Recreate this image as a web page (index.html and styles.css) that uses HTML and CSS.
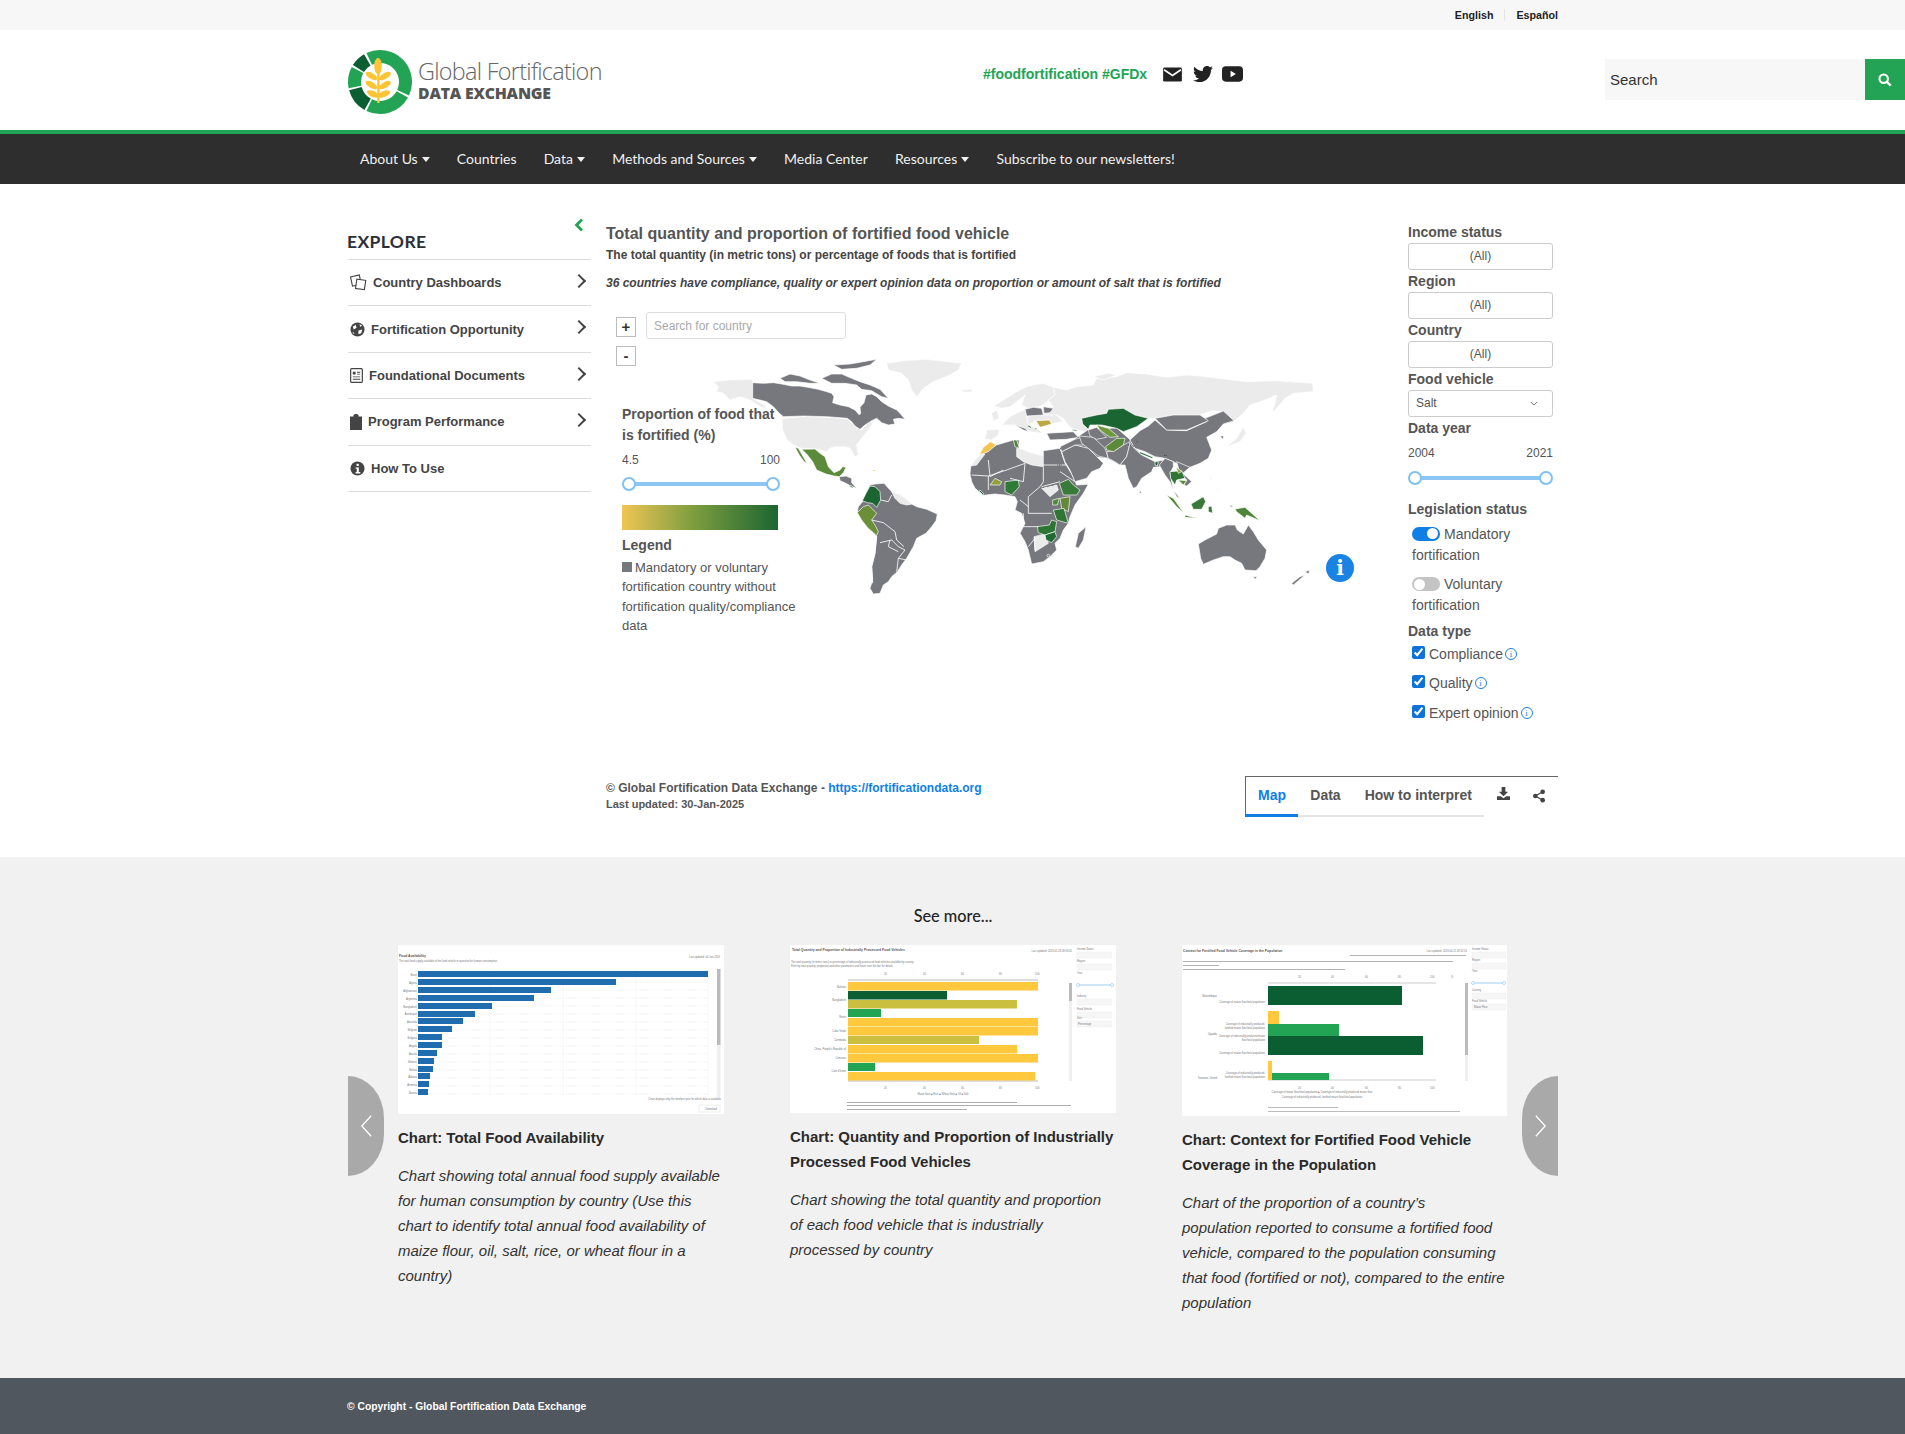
FILE: index.html
```html
<!DOCTYPE html>
<html lang="en">
<head>
<meta charset="utf-8">
<title>Global Fortification Data Exchange</title>
<link rel="stylesheet" href="styles.css">
</head>
<body>
<div class="topbar"><a class="lang lang-first">English</a><a class="lang">Español</a></div>

<header class="masthead">
  <a class="logo">
    <svg class="logo-mark" viewBox="0 0 66 66" width="66" height="66">
      <g fill="none" stroke-width="13">
        <path stroke="#23a455" d="M22.2 9.9A25.5 25.5 0 0 1 56.1 43.8"/>
        <path stroke="#23a455" d="M55.3 45.4A25.5 25.5 0 0 1 22.2 56.1"/>
        <path stroke="#0b5e31" d="M20.6 55.3A25.5 25.5 0 0 1 8.4 39.6"/>
        <path stroke="#23a455" d="M8 37.9A25.5 25.5 0 0 1 10.5 21"/>
        <path stroke="#0b5e31" d="M11.4 19.5A25.5 25.5 0 0 1 20.3 10.9"/>
      </g>
      <g fill="#fdc536">
        <ellipse cx="31" cy="17" rx="3.800" ry="8"/>
        <ellipse cx="24.500" cy="27" rx="6.500" ry="3" transform="rotate(30 24.500 27)"/>
        <ellipse cx="38" cy="27" rx="6.500" ry="3" transform="rotate(-30 38 27)"/>
        <ellipse cx="24.500" cy="36" rx="6.500" ry="3" transform="rotate(30 24.500 36)"/>
        <ellipse cx="38" cy="36" rx="6.500" ry="3" transform="rotate(-30 38 36)"/>
        <ellipse cx="26" cy="45" rx="6.500" ry="3" transform="rotate(25 26 45)"/>
        <ellipse cx="37" cy="45" rx="6.500" ry="3" transform="rotate(-25 37 45)"/>
        <rect x="30.200" y="20" width="2.400" height="34"/>
      </g>
    </svg>
    <span class="logo-text"><span class="logo-top">Global Fortification</span><span class="logo-bottom">DATA EXCHANGE</span></span>
  </a>
  <div class="social">
    <span class="hashtags">#foodfortification #GFDx</span>
    <svg class="soc" viewBox="0 0 20 16" width="19" height="15"><rect width="20" height="15" y=".5" rx="1.500" fill="#222"/><path d="M1 3l9 6 9-6" fill="none" stroke="#fff" stroke-width="1.800"/></svg>
    <svg class="soc soc-tw" viewBox="0 0 512 512" width="20" height="20"><path fill="#222" d="M459.37 151.716c.325 4.548.325 9.097.325 13.645 0 138.72-105.583 298.558-298.558 298.558-59.452 0-114.68-17.219-161.137-47.106 8.447.974 16.568 1.299 25.34 1.299 49.055 0 94.213-16.568 130.274-44.832-46.132-.975-84.792-31.188-98.112-72.772 6.498.974 12.995 1.624 19.818 1.624 9.421 0 18.843-1.3 27.614-3.573-48.081-9.747-84.143-51.98-84.143-102.985v-1.299c13.969 7.797 30.214 12.67 47.431 13.319-28.264-18.843-46.781-51.005-46.781-87.391 0-19.492 5.197-37.36 14.294-52.954 51.655 63.675 129.3 105.258 216.365 109.807-1.624-7.797-2.599-15.918-2.599-24.04 0-57.828 46.782-104.934 104.934-104.934 30.213 0 57.502 12.67 76.67 33.137 23.715-4.548 46.456-13.32 66.599-25.34-7.798 24.366-24.366 44.833-46.132 57.827 21.117-2.273 41.584-8.122 60.426-16.243-14.292 20.791-32.161 39.308-52.628 54.253z"/></svg>
    <svg class="soc" viewBox="0 0 22 16" width="21" height="16"><rect width="22" height="16" rx="4" fill="#222"/><path d="M9 4.500l5.500 3.500L9 11.500z" fill="#fff"/></svg>
  </div>
  <form class="site-search">
    <input class="site-search-input" type="text" placeholder="Search">
    <button class="site-search-btn" type="button" aria-label="Search">
      <svg viewBox="0 0 16 16" width="14" height="14"><circle cx="6.500" cy="6.500" r="4.800" fill="none" stroke="#fff" stroke-width="2.400"/><path d="M10 10l4.500 4.500" stroke="#fff" stroke-width="2.800"/></svg>
    </button>
  </form>
</header>

<nav class="mainnav">
  <a class="nav-item caret">About Us</a>
  <a class="nav-item">Countries</a>
  <a class="nav-item caret">Data</a>
  <a class="nav-item caret">Methods and Sources</a>
  <a class="nav-item">Media Center</a>
  <a class="nav-item caret">Resources</a>
  <a class="nav-item">Subscribe to our newsletters!</a>
</nav>

<main class="viz">
  <div class="columns">
    <aside class="sidebar">
      <div class="side-head">
        <h2 class="side-title">EXPLORE</h2>
        <svg class="side-collapse" viewBox="0 0 10 14" width="10" height="14"><path d="M8 1.500L2.500 7 8 12.500" fill="none" stroke="#23a455" stroke-width="2.800"/></svg>
      </div>
      <a class="side-row">
        <svg class="side-ic" viewBox="0 0 18 18" width="17" height="17"><g fill="#fff" stroke="#444" stroke-width="1.200"><rect x="1.500" y="2" width="9.500" height="10" transform="rotate(-12 6 7)"/><rect x="6.500" y="6" width="9.500" height="10" transform="rotate(8 11 11)"/></g></svg>
        <span class="side-label">Country Dashboards</span><span class="side-chev"></span>
      </a>
      <a class="side-row">
        <svg class="side-ic" viewBox="0 0 16 16" width="15" height="15"><circle cx="8" cy="8" r="7.500" fill="#444"/><path d="M3 5l3-2 1 3-3 2zM9 9l4-1-1 4-3 1zM10 2l3 2-2 1zM3 10l2 3-2-1z" fill="#fff"/></svg>
        <span class="side-label">Fortification Opportunity</span><span class="side-chev"></span>
      </a>
      <a class="side-row">
        <svg class="side-ic" viewBox="0 0 14 16" width="13" height="15"><rect x=".7" y=".7" width="12.600" height="14.600" rx="1" fill="none" stroke="#444" stroke-width="1.300"/><path d="M3 4h3v3H3zM7.500 4H11v1H7.500zM7.500 6H11v1H7.500zM3 9h8v1H3zM3 11.500h8v1H3z" fill="#444"/></svg>
        <span class="side-label">Foundational Documents</span><span class="side-chev"></span>
      </a>
      <a class="side-row">
        <svg class="side-ic" viewBox="0 0 12 16" width="12" height="16"><path d="M0 2.500h3.500V1l1.500-1h2l1.500 1v1.500H12V16H0z" fill="#444"/></svg>
        <span class="side-label">Program Performance</span><span class="side-chev"></span>
      </a>
      <a class="side-row">
        <svg class="side-ic" viewBox="0 0 16 16" width="15" height="15"><circle cx="8" cy="8" r="7.500" fill="#444"/><rect x="7" y="3" width="2.400" height="2.400" fill="#fff"/><path d="M6 6.800h3.400v5H11v1.500H6v-1.500h1.200V8.300H6z" fill="#fff"/></svg>
        <span class="side-label">How To Use</span>
      </a>
    </aside>

    <section class="center">
      <h1 class="viz-title">Total quantity and proportion of fortified food vehicle</h1>
      <p class="viz-sub">The total quantity (in metric tons) or percentage of foods that is fortified</p>
      <p class="viz-note">36 countries have compliance, quality or expert opinion data on proportion or amount of salt that is fortified</p>

      <div class="map-canvas">
        <svg class="worldmap" viewBox="-150 0 1950 780" width="650" height="260">
          <g stroke="#fff" stroke-width="2" stroke-linejoin="round">
            <g fill="#ebebeb">
              <polygon points="-140,95 -95,90 -22,88 -22,145 20,170 10,175 -30,150 -60,140 -90,150 -110,130 -130,125 -125,110"/>
              <polygon points="66,205 130,200 200,202 262,207 275,218 285,230 305,240 330,212 338,220 325,240 310,258 300,270 290,285 295,315 285,320 270,295 255,290 225,290 210,295 200,305 170,297 125,295 100,285 80,268 68,240"/>
              <polygon points="380,40 430,32 500,28 605,40 595,60 570,75 520,95 490,115 470,140 455,120 445,90 425,70 385,60"/>
              <polygon points="605,120 640,118 632,126 608,126"/>
            </g>
            <g fill="#77787e">
              <polygon points="-22,98 10,100 40,98 65,102 95,108 120,108 150,113 175,118 200,125 215,130 222,140 218,158 240,165 265,170 285,180 298,195 302,190 300,172 312,158 318,135 335,132 350,140 365,155 385,168 410,180 420,190 435,208 415,205 400,208 405,222 385,225 365,218 350,205 335,212 315,225 300,238 285,228 275,215 262,205 200,200 130,198 70,200 58,190 40,170 20,155 -22,145"/>
              <polygon points="60,85 90,72 120,78 150,90 180,100 150,100 110,95 75,95"/>
              <polygon points="220,45 270,42 310,35 350,28 330,45 290,55 245,58"/>
              <polygon points="185,85 215,72 245,72 275,85 300,95 330,105 360,118 385,145 365,140 335,122 305,118 290,105 255,100 215,100"/>
              <polygon points="238,380 258,378 275,385 275,398 290,415 272,408 258,400 240,392"/>
              <polygon points="330,405 345,402 372,400 395,425 420,445 440,462 455,462 470,470 500,478 532,492 528,512 515,530 498,550 470,565 460,590 440,625 425,645 412,665 395,680 385,695 370,705 360,730 340,732 330,715 338,690 335,650 345,610 350,560 340,550 320,530 305,510 292,488 295,470 310,452 318,430"/>
            </g>
            <polygon fill="#ebebeb" points="395,425 418,432 445,452 455,462 440,465 420,460 405,445"/>
            <g fill="#5b8a3a">
              <polygon points="125,298 165,297 180,310 195,320 205,350 222,368 240,360 248,350 258,352 250,368 238,380 222,378 198,372 170,360 158,335 140,312"/>
              <polygon points="105,292 115,295 125,312 140,338 132,335 118,315"/>
            </g>
            <polygon fill="#1c6532" points="330,408 345,410 360,425 362,450 350,472 338,460 322,458 307,452 318,430"/>
            <polygon fill="#6a8f38" points="292,488 310,470 325,465 350,490 335,510 345,525 355,545 350,556 325,535 305,510"/>
            <polygon fill="#1c6532" points="270,405 280,412 277,414 268,408"/>
            <polygon fill="#f3c550" stroke="none" points="338,360 345,360 343,364"/>
            <g fill="none" stroke-width="2.500">
              <polyline points="362,450 385,455 395,435"/>
              <polyline points="335,510 370,518 405,545 410,570 432,590"/>
              <polyline points="350,556 345,610 335,650 338,700"/>
              <polyline points="360,578 395,570 415,590 435,600 415,625 410,665"/>
              <polyline points="415,625 440,630"/>
              <polyline points="390,570 385,590 415,605"/>
            </g>
          </g>
          <g transform="translate(600 0)" stroke="#fff" stroke-width="2" stroke-linejoin="round">
            <g fill="#ebebeb">
              <polygon points="100,168 130,150 170,125 205,108 250,100 280,112 285,135 265,150 250,165 235,170 205,175 185,165 195,135 170,155 150,170 125,175"/>
              <polygon points="280,112 320,120 350,110 400,105 410,85 470,80 500,68 560,72 620,82 680,75 720,78 800,88 860,95 950,92 1058,100 1060,125 1000,130 975,145 950,175 935,190 945,160 950,135 915,150 870,165 850,190 820,215 790,185 755,182 720,195 680,198 640,195 585,205 565,205 525,195 490,175 445,178 440,190 410,195 365,205 368,222 385,238 400,250 350,240 330,232 310,205 290,195 250,195 245,175 270,175 280,170 265,150 285,135"/>
              <polygon points="120,235 135,215 150,200 170,190 195,178 200,198 205,225 230,235 250,250 210,245 195,240 165,225 130,225"/>
              <polygon points="75,268 80,240 118,238 115,255 95,270"/>
              <polygon points="200,198 250,195 290,195 310,215 270,222 268,210 228,212 205,225"/>
              <polygon points="95,190 110,180 118,205 100,212"/>
              <polygon points="830,265 850,230 858,250 840,275 800,290"/>
              <polygon points="750,365 756,390 751,390"/>
              <polygon points="770,405 776,425 772,425"/>
              <polygon points="400,80 445,70 470,75 430,90"/>
            </g>
            <polygon fill="#77787e" points="30,372 32,350 45,335 60,318 72,310 90,295 110,285 160,270 178,270 175,295 215,310 250,318 250,302 300,295 315,340 335,372 350,405 385,403 370,430 345,465 330,500 325,520 310,540 300,565 285,580 290,600 270,620 250,635 215,642 205,600 195,575 180,550 195,520 185,490 165,480 172,455 165,440 135,435 105,432 70,436 45,415 35,395"/>
            <g fill="#ebebeb">
              <polygon points="170,295 215,310 250,318 250,350 215,345 190,335 170,320"/>
              <polygon points="32,348 58,315 75,312 50,345"/>
              <polygon points="222,560 255,552 265,580 225,605"/>
              <polygon points="245,415 290,405 295,420 270,440"/>
            </g>
            <polygon fill="#f3c550" points="58,315 70,292 92,275 108,285 85,305"/>
            <polygon fill="#4e8538" points="160,270 170,270 178,295 165,290"/>
            <polygon fill="#2f7a35" points="135,395 175,390 178,410 155,435 135,425"/>
            <polygon fill="#8fa03c" points="90,405 105,385 125,395 120,405"/>
            <polygon fill="#1c6532" points="60,420 72,432 68,434 58,424"/>
            <polygon fill="#39793a" points="298,400 325,388 340,405 360,420 350,435 310,435"/>
            <polygon fill="#63893a" points="300,445 330,440 325,485 305,475"/>
            <polygon fill="#4d8a3a" points="278,450 298,445 292,465 278,465"/>
            <polygon fill="#2f7535" points="280,480 312,475 325,520 290,510"/>
            <polygon fill="#2d7535" points="232,530 268,525 275,510 290,515 285,545 255,555 235,548"/>
            <polygon fill="#1f6b33" points="255,555 285,545 290,560 275,578 258,570"/>
            <polygon fill="#77787e" points="346,590 355,550 378,530 370,570 355,595"/>
            <circle cx="265" cy="617" r="4" fill="#77787e"/>
            <g fill="none" stroke-width="2.500">
              <polyline points="35,375 85,378 140,360 195,340"/>
              <polyline points="85,330 90,380 130,360"/>
              <polyline points="195,340 190,395 150,385"/>
              <polyline points="250,350 250,395 240,410 205,440 205,490 275,490"/>
              <polyline points="250,345 320,345"/>
              <polyline points="180,450 205,470"/>
              <polyline points="190,490 190,530 235,530"/>
              <polyline points="205,590 225,565 225,600"/>
              <polyline points="300,365 345,395"/>
              <polyline points="245,410 300,395"/>
              <polyline points="85,378 85,420"/>
            </g>
            <g fill="#77787e">
              <polygon points="195,178 220,172 245,175 250,195 200,198"/>
              <polygon points="250,170 280,175 270,188 252,190"/>
              <polygon points="260,250 290,248 340,245 355,262 320,268 270,270"/>
              <polygon points="165,225 195,235 205,245 190,240"/>
              <polygon stroke="none" points="345,268 358,258 385,240 470,235 510,270 525,295 545,315 585,335 510,300 480,345 445,325 410,320 385,295 345,285"/>
              <polygon points="305,305 345,285 385,295 410,320 430,340 420,355 395,365 380,385 345,395 330,360 315,335"/>
              <polygon points="300,290 345,268 365,262 370,285 345,285 305,305"/>
              <polygon points="358,258 400,262 435,295 445,325 415,318 385,295 365,280"/>
              <polygon points="385,240 410,232 440,262 410,268 390,258"/>
              <polygon points="440,305 462,303 490,285 510,275 505,300 500,320 480,345 465,335 445,325"/>
              <polygon points="510,280 525,298 545,315 585,335 610,330 600,350 580,352 575,365 545,385 530,410 520,415 505,385 495,345 480,345 500,320 505,300"/>
              <polygon points="510,270 540,242 565,228 585,210 620,240 680,242 740,215 735,205 790,183 822,212 790,222 770,245 740,262 755,300 745,325 720,340 690,352 660,345 640,335 615,325 585,320 555,305 525,295"/>
              <polygon points="585,205 640,195 720,195 745,212 680,240 620,240"/>
              <polygon points="598,345 615,325 640,335 640,350 630,370 640,420 630,395 615,375"/>
              <polygon points="650,335 690,352 668,370 695,395 680,408 672,405 680,390 660,370"/>
              <polygon points="640,420 660,445 650,440"/>
              <polygon points="780,258 792,258 788,268"/>
              <polygon points="538,420 545,428 539,430"/>
            </g>
            <polygon fill="#bba743" points="228,212 268,210 275,222 240,232"/>
            <polygon fill="#1c6532" points="205,225 215,232 211,234 203,229"/>
            <polygon fill="#1c6532" points="337,238 352,241 350,244 337,241"/>
            <polygon fill="#1b6533" points="365,205 410,195 440,190 445,178 490,175 525,195 565,205 530,230 490,245 470,235 425,225 390,225 385,238 368,222"/>
            <polygon fill="#6f9a3a" points="410,225 445,235 475,260 450,262 420,240"/>
            <polygon fill="#5b8a3a" points="437,290 470,265 495,265 490,285 460,305 440,300"/>
            <polygon fill="#1c6532" points="540,305 580,322 575,325 538,310"/>
            <polygon fill="#1c6532" points="585,335 595,335 592,348 585,345"/>
            <polygon fill="#2f7535" points="630,365 665,362 675,385 650,390 645,405 632,385"/>
            <polygon fill="#8aa03a" points="648,350 665,365 655,370"/>
            <polygon fill="#5b8a3a" points="655,390 680,392 670,405"/>
            <polygon fill="#4e8538" points="620,435 640,445 672,490 650,470"/>
            <polygon fill="#4e8538" points="675,495 710,505 675,502"/>
            <polygon fill="#4e8538" points="810,465 820,468 812,472"/>
            <polygon fill="#4e8538" points="825,477 855,472 900,512 860,495 855,505 830,485"/>
            <polygon fill="#3a7a38" points="693,462 730,440 737,455 725,478 700,478"/>
            <polygon fill="#3a7a38" points="745,470 755,468 758,490 745,485"/>
            <g fill="#77787e">
              <polygon points="715,582 735,570 770,552 775,535 800,525 825,525 832,540 850,552 865,525 880,545 895,570 920,600 915,625 900,650 888,662 855,660 845,640 825,630 810,620 790,620 760,630 730,643 722,625"/>
              <polygon points="880,680 892,680 885,688"/>
              <polygon points="995,700 1020,680 1035,675 1000,705"/>
              <polygon points="1035,665 1050,660 1045,672"/>
            </g>
            <path d="M292 345h14M248 412h6M262 410h6M275 407h6M505 285h6M518 288h6M530 275h5M612 316h8M300 296h4M226 236h4" fill="none" stroke="#222" stroke-width="2" stroke-dasharray="3 2"/>
          </g>
        </svg>
        <div class="map-tools">
          <div class="zoom-col"><button class="zoom-btn" type="button">+</button><button class="zoom-btn" type="button">-</button></div>
          <input class="country-search" type="text" placeholder="Search for country">
        </div>
        <div class="legend">
          <h3 class="legend-title">Proportion of food that is fortified (%)</h3>
          <div class="range-vals"><span>4.5</span><span>100</span></div>
          <div class="range"><span class="knob"></span><span class="knob"></span></div>
          <div class="gradient"></div>
          <h3 class="legend-head">Legend</h3>
          <p class="legend-text"><span class="swatch"></span>Mandatory or voluntary fortification country without fortification quality/compliance data</p>
        </div>
        <span class="map-info">i</span>
      </div>
    </section>

    <aside class="filters">
      <label class="f-label">Income status</label><div class="f-box">(All)</div>
      <label class="f-label">Region</label><div class="f-box">(All)</div>
      <label class="f-label">Country</label><div class="f-box">(All)</div>
      <label class="f-label">Food vehicle</label>
      <div class="f-box f-select">Salt<svg viewBox="0 0 10 6" width="8" height="5"><path d="M1 1l4 4 4-4" fill="none" stroke="#555" stroke-width="1"/></svg></div>
      <label class="f-label">Data year</label>
      <div class="range-vals year-vals"><span>2004</span><span>2021</span></div>
      <div class="range year-range"><span class="knob"></span><span class="knob"></span></div>
      <label class="f-label f-legis">Legislation status</label>
      <div class="opt"><span class="toggle on"></span>Mandatory fortification</div>
      <div class="opt"><span class="toggle"></span>Voluntary fortification</div>
      <label class="f-label f-dtype">Data type</label>
      <div class="check"><input type="checkbox" checked><span>Compliance</span><span class="ci">i</span></div>
      <div class="check"><input type="checkbox" checked><span>Quality</span><span class="ci">i</span></div>
      <div class="check"><input type="checkbox" checked><span>Expert opinion</span><span class="ci">i</span></div>
    </aside>
  </div>

  <div class="viz-foot">
    <div class="credit">
      <p class="credit-main">© Global Fortification Data Exchange - <a class="credit-link">https://fortificationdata.org</a></p>
      <p class="credit-date">Last updated: 30-Jan-2025</p>
    </div>
    <div class="tabbar">
      <div class="tabs"><a class="tab active">Map</a><a class="tab">Data</a><a class="tab">How to interpret</a></div>
      <svg class="tab-ic" viewBox="0 0 14 14" width="13" height="13"><path d="M5 0h4v5h3L7 10 2 5h3zM0 10h4l3 2 3-2h4v4H0z" fill="#444"/></svg>
      <svg class="tab-ic tab-share" viewBox="0 0 13 14" width="12" height="14"><g fill="#444"><circle cx="10.500" cy="2.500" r="2.500"/><circle cx="10.500" cy="11.500" r="2.500"/><circle cx="2.500" cy="7" r="2.500"/></g><path d="M10.500 2.500l-8 4.500 8 4.500" fill="none" stroke="#444" stroke-width="1.300"/></svg>
    </div>
  </div>
</main>

<section class="more">
  <h2 class="more-title">See more...</h2>
  <div class="carousel">
    <button class="arrow arrow-left" type="button" aria-label="Previous"><svg viewBox="0 0 14 24" width="13" height="24"><path d="M12 1L2 12l10 11" fill="none" stroke="#fff" stroke-width="1.400"/></svg></button>
    <div class="cards">
      <article class="card">
        <svg class="thumb" viewBox="0 0 326 169" width="326" height="169">
          <rect width="326" height="169" fill="#fff"/>
          <text x="1" y="12" class="t4 td">Food Availability</text>
          <text x="1" y="17" class="t3">The total food supply available of the food vehicle in question for human consumption</text>
          <text x="322" y="13" class="t3 end">Last updated: 04-Jun-2019</text>
          <g stroke="#eee" stroke-dasharray="2 1" stroke-width=".7">
            <path d="M92 25V150M165 25V150M238 25V150M310 25V150"/>
            <path d="M20 37H310M20 45H310M20 53H310M20 61H310M20 69H310M20 77H310M20 85H310M20 93H310M20 101H310M20 109H310M20 117H310M20 125H310M20 133H310M20 141H310M20 149H310"/>
          </g>
          <g fill="#1f6cae">
            <rect x="20" y="26" width="290" height="6"/><rect x="20" y="34" width="198" height="6"/><rect x="20" y="42" width="133" height="6"/><rect x="20" y="50" width="116" height="6"/><rect x="20" y="58" width="74" height="6"/><rect x="20" y="66" width="57" height="6"/><rect x="20" y="73" width="45" height="6"/><rect x="20" y="81" width="34" height="6"/><rect x="20" y="89" width="24" height="6"/><rect x="20" y="97" width="24" height="6"/><rect x="20" y="105" width="19" height="6"/><rect x="20" y="113" width="16" height="6"/><rect x="20" y="121" width="15" height="6"/><rect x="20" y="128" width="12" height="6"/><rect x="20" y="136" width="11" height="6"/><rect x="20" y="144" width="10" height="6"/>
          </g>
          <g class="t3 end">
            <text x="19" y="31">Brazil</text><text x="19" y="39">Algeria</text><text x="19" y="47">Afghanistan</text><text x="19" y="55">Argentina</text><text x="19" y="63">Bangladesh</text><text x="19" y="70">Azerbaijan</text><text x="19" y="78">Australia</text><text x="19" y="86">Belgium</text><text x="19" y="94">Bulgaria</text><text x="19" y="102">Angola</text><text x="19" y="110">Austria</text><text x="19" y="118">Belarus</text><text x="19" y="126">Bolivia</text><text x="19" y="133">Albania</text><text x="19" y="141">Armenia</text><text x="19" y="149">Bosnia</text>
          </g>
          <rect x="319" y="24" width="3.500" height="76" fill="#bbb"/><rect x="319" y="100" width="3.500" height="52" fill="#f0f0f0"/>
          <text x="323" y="155" class="t3 end">Chart displays only the timeliest year for which data is available</text>
          <rect x="301" y="160" width="21" height="7" fill="#fff" stroke="#ddd" stroke-width=".5"/>
          <text x="319" y="165" class="t3 end">Download</text>
        </svg>
        <h3 class="card-title">Chart: Total Food Availability</h3>
        <p class="card-text">Chart showing total annual food supply available for human consumption by country (Use this chart to identify total annual food availability of maize flour, oil, salt, rice, or wheat flour in a country)</p>
      </article>
      <article class="card">
        <svg class="thumb" viewBox="0 0 326 168" width="326" height="168">
          <rect width="326" height="168" fill="#fff"/>
          <text x="2" y="6" class="t4 td">Total Quantity and Proportion of Industrially Processed Food Vehicles</text>
          <text x="1" y="18" class="t3">The total quantity (in metric tons) or percentage of industrially processed food vehicles available by country</text>
          <text x="1" y="22" class="t3">Filter by total quantity, proportion and other parameters and hover over the bar for details</text>
          <text x="282" y="7" class="t3 end">Last updated: 2019-01-28 09:09:41</text>
          <path d="M58 35H248M58 136H248" stroke="#bbb" stroke-width="1"/>
          <g class="t3"><text x="94" y="30">20</text><text x="133" y="30">40</text><text x="171" y="30">60</text><text x="209" y="30">80</text><text x="245" y="30">100</text><text x="94" y="144">20</text><text x="133" y="144">40</text><text x="171" y="144">60</text><text x="209" y="144">80</text><text x="245" y="144">100</text></g>
          <rect x="58" y="37" width="190" height="8.500" fill="#ffc83d"/>
          <rect x="58" y="46" width="99" height="8.500" fill="#0b5e31"/>
          <rect x="58" y="55" width="169" height="8.500" fill="#cbbf3f"/>
          <rect x="58" y="64" width="33" height="8" fill="#23a455"/>
          <rect x="58" y="73" width="190" height="8.500" fill="#ffc83d"/>
          <rect x="58" y="82" width="190" height="8.500" fill="#ffc83d"/>
          <rect x="58" y="91" width="131" height="8" fill="#cbbf3f"/>
          <rect x="58" y="100" width="169" height="8.500" fill="#ffc83d"/>
          <rect x="58" y="109" width="190" height="8.500" fill="#ffc83d"/>
          <rect x="58" y="118" width="27" height="8" fill="#23a455"/>
          <rect x="58" y="127" width="187" height="8.500" fill="#ffc83d"/>
          <g class="t3 end"><text x="56" y="43">Bahrain</text><text x="56" y="56">Bangladesh</text><text x="56" y="73">Benin</text><text x="56" y="87">Cabo Verde</text><text x="56" y="96">Cambodia</text><text x="56" y="105">China, People's Republic of</text><text x="56" y="114">Comoros</text><text x="56" y="127">Cote d'Ivoire</text></g>
          <rect x="279" y="38" width="3" height="18" fill="#bbb"/><rect x="279" y="56" width="3" height="80" fill="#f0f0f0"/>
          <g fill="#f6f6f6" stroke="#eee" stroke-width=".5"><rect x="287" y="7" width="35" height="6"/><rect x="287" y="19" width="35" height="6"/><rect x="287" y="54" width="35" height="6"/><rect x="287" y="67" width="35" height="6"/><rect x="287" y="76" width="35" height="6"/></g>
          <g class="t3"><text x="287" y="5">Income Status</text><text x="287" y="17">Region</text><text x="287" y="29">Year</text><text x="287" y="52">Industry</text><text x="287" y="65">Food Vehicle</text><text x="287" y="74">Unit</text><text x="288" y="80">Percentage</text></g>
          <path d="M288 40H322" stroke="#9fcdf3" stroke-width="1"/><g fill="#fff" stroke="#8cc4f2" stroke-width=".6"><circle cx="288" cy="40" r="1.500"/><circle cx="322" cy="40" r="1.500"/></g>
          <text x="153" y="150" class="t3 mid">Maize flour ■ Rice ■ Wheat flour ■ Oil ■ Salt</text>
          <g fill="#999"><rect x="57" y="157" width="170" height=".8"/><rect x="57" y="160" width="224" height=".8"/><rect x="57" y="164" width="120" height=".8"/></g>
        </svg>
        <h3 class="card-title">Chart: Quantity and Proportion of Industrially Processed Food Vehicles</h3>
        <p class="card-text">Chart showing the total quantity and proportion<br>of each food vehicle that is industrially<br>processed by country</p>
      </article>
      <article class="card">
        <svg class="thumb" viewBox="0 0 325 171" width="325" height="171">
          <rect width="325" height="171" fill="#fff"/>
          <text x="1" y="7" class="t4 td">Context for Fortified Food Vehicle Coverage in the Population</text>
          <text x="285" y="7" class="t3 end">Last updated: 2019-04-15 09:32:16</text>
          <g fill="#aaa"><rect x="1" y="16" width="270" height=".9"/><rect x="1" y="20" width="36" height=".9"/><rect x="1" y="24" width="162" height=".9"/><rect x="168" y="10" width="116" height=".9"/></g>
          <path d="M86 38H254M86 135H254" stroke="#ccc" stroke-width="1"/>
          <g class="t3"><text x="116" y="33">20</text><text x="149" y="33">40</text><text x="183" y="33">60</text><text x="216" y="33">80</text><text x="248" y="33">100</text><text x="269" y="33">%</text><text x="116" y="144">20</text><text x="149" y="144">40</text><text x="183" y="144">60</text><text x="216" y="144">80</text><text x="248" y="144">100</text></g>
          <rect x="86" y="41" width="134" height="19" fill="#0b5e31"/>
          <rect x="86" y="66" width="11" height="19" fill="#ffc83d"/>
          <rect x="86" y="79" width="71" height="19" fill="#23a455"/>
          <rect x="86" y="91" width="155" height="19" fill="#0b5e31"/>
          <rect x="86" y="116" width="4" height="19" fill="#ffc83d"/>
          <rect x="90" y="128" width="57" height="7" fill="#23a455"/>
          <g class="t3 end"><text x="35" y="52">Mozambique</text><text x="35" y="90">Uganda</text><text x="35" y="134">Tanzania, United</text><text x="83" y="58">Coverage of maize flour/total population</text><text x="83" y="80">Coverage of industrially produced,</text><text x="83" y="84">fortified maize flour/total population</text><text x="83" y="92">Coverage of industrially produced maize</text><text x="83" y="96">flour/total population</text><text x="83" y="109">Coverage of maize flour/total population</text><text x="83" y="129">Coverage of industrially produced,</text><text x="83" y="133">fortified maize flour/total population</text></g>
          <rect x="283" y="38" width="3" height="72" fill="#bbb"/><rect x="283" y="110" width="3" height="26" fill="#f0f0f0"/>
          <text x="140" y="148" class="t3 mid">Coverage of maize flour/total population ■ Coverage of industrially produced maize flour</text>
          <text x="140" y="153" class="t3 mid">Coverage of industrially produced, fortified maize flour/total population</text>
          <g fill="#aaa"><rect x="86" y="162" width="70" height=".8"/><rect x="86" y="166" width="192" height=".8"/></g>
          <g fill="#f6f6f6" stroke="#eee" stroke-width=".5"><rect x="290" y="7" width="34" height="6"/><rect x="290" y="18" width="34" height="6"/><rect x="290" y="48" width="34" height="6"/><rect x="290" y="59" width="34" height="6"/></g>
          <g class="t3"><text x="290" y="5">Income Status</text><text x="290" y="16">Region</text><text x="290" y="27">Year</text><text x="290" y="46">Country</text><text x="290" y="57">Food Vehicle</text><text x="292" y="63">Maize Flour</text></g>
          <path d="M291 38H322" stroke="#9fcdf3" stroke-width="1"/><g fill="#fff" stroke="#8cc4f2" stroke-width=".6"><circle cx="291" cy="38" r="1.500"/><circle cx="322" cy="38" r="1.500"/></g>
        </svg>
        <h3 class="card-title">Chart: Context for Fortified Food Vehicle Coverage in the Population</h3>
        <p class="card-text">Chart of the proportion of a country’s<br>population reported to consume a fortified food<br>vehicle, compared to the population consuming<br>that food (fortified or not), compared to the entire<br>population</p>
      </article>
    </div>
    <button class="arrow arrow-right" type="button" aria-label="Next"><svg viewBox="0 0 14 24" width="13" height="24"><path d="M2 1l10 11L2 23" fill="none" stroke="#fff" stroke-width="1.400"/></svg></button>
  </div>
</section>

<footer class="sitefoot">© Copyright - Global Fortification Data Exchange</footer>
</body>
</html>
```
FILE: styles.css
```css
* { box-sizing: border-box; }
html, body { margin: 0; padding: 0; }
body { font-family: "Liberation Sans", Arial, sans-serif; color: #333; background: #fff; width: 1905px; }
h1, h2, h3, p { margin: 0; }
a { color: inherit; text-decoration: none; }

/* top bar */
.topbar { height: 30px; background: #f7f7f7; display: flex; justify-content: flex-end; align-items: center; padding-right: 347px; }
.lang { font-size: 10.700px; font-weight: 700; color: #222; }
.lang-first { padding-right: 11px; margin-right: 11px; border-right: 1px solid #e4e4e4; }

/* masthead */
.masthead { height: 104px; border-bottom: 4px solid #23a455; display: flex; padding-left: 347px; position: relative; }
.logo { display: flex; width: 256px; height: 66px; margin-top: 19px; }
.logo-mark { flex: none; }
.logo-text { display: flex; flex-direction: column; margin-left: 5px; padding-top: 9px; }
.logo-top { font-family: "Open Sans", sans-serif; font-weight: 300; font-size: 23.400px; line-height: 27px; color: #666; letter-spacing: -.7px; white-space: nowrap; }
.logo-bottom { font-family: "Open Sans", sans-serif; font-weight: 800; font-size: 15.800px; line-height: 17px; color: #555; white-space: nowrap; letter-spacing: -.2px; }
.social { display: flex; align-items: center; height: 20px; margin: 34px 0 0 380px; }
.hashtags { font-size: 14px; font-weight: 700; color: #23a455; width: 180px; white-space: nowrap; }
.soc { margin-right: 11px; flex: none; }
.soc-tw { margin-right: 9px; }
.site-search { display: flex; position: absolute; left: 1605px; top: 29px; width: 300px; height: 41px; }
.site-search-input { flex: 1; min-width: 0; border: 0; background: #f7f7f7; padding: 0 5px; font: 15px "Liberation Sans", Arial, sans-serif; }
.site-search-input::placeholder { color: #333; opacity: 1; }
.site-search-btn { width: 40px; border: 0; padding: 0; background: #23a455; display: flex; align-items: center; justify-content: center; }

/* nav */
.mainnav { height: 50px; background: #2d2e2d; display: flex; align-items: center; padding: 0 0 2px 360px; gap: 27.200px; }
.nav-item { font-family: Lato, sans-serif; font-size: 14px; color: #f1f1f1; white-space: nowrap; }
.caret::after { content: ""; display: inline-block; margin-left: 4px; vertical-align: 2px; border-left: 4px solid transparent; border-right: 4px solid transparent; border-top: 5px solid #f1f1f1; }

/* main */
.viz { height: 673px; padding-left: 348px; }
.columns { display: flex; height: 592px; }
.sidebar { width: 243px; margin-right: 15px; flex: none; padding-top: 31px; }
.side-head { height: 45px; border-bottom: 1px solid #ddd; position: relative; }
.side-title { font-family: Lato, sans-serif; font-size: 17.500px; font-weight: 700; line-height: 22px; color: #2b3038; letter-spacing: .4px; position: absolute; left: -1px; bottom: 6px; }
.side-collapse { position: absolute; right: 7px; top: 3px; }
.side-row { display: flex; align-items: center; height: 46.400px; border-bottom: 1px solid #ddd; padding: 0 5px 0 2px; position: relative; }
.side-ic { flex: none; margin-right: 6px; }
.side-label { font-size: 13px; font-weight: 700; color: #444; white-space: nowrap; }
.side-chev { position: absolute; right: 7px; top: 16px; width: 10px; height: 10px; border-top: 2.600px solid #444; border-right: 2.600px solid #444; transform: rotate(45deg); }

.center { width: 789px; flex: none; margin-right: 13px; padding-top: 40px; }
.viz-title { font-size: 16px; line-height: 20px; font-weight: 700; color: #555; white-space: nowrap; }
.viz-sub { font-size: 12px; line-height: 16px; font-weight: 700; color: #444; margin-top: 3px; white-space: nowrap; }
.viz-note { font-size: 12px; line-height: 16px; font-weight: 700; font-style: italic; color: #444; margin-top: 12px; white-space: nowrap; }
.map-canvas { position: relative; height: 471px; margin-top: 14px; }
.worldmap { position: absolute; left: 104px; top: 45px; }
.map-tools { position: relative; display: flex; padding-left: 10px; gap: 10px; align-items: flex-start; padding-top: 7px; }
.zoom-col { display: flex; flex-direction: column; gap: 9px; padding-top: 5px; }
.zoom-btn { width: 20px; height: 20px; padding: 0; border: 1px solid #bbb; background: #fff; font: 700 15px/16px "Liberation Sans", Arial, sans-serif; color: #333; }
.country-search { width: 200px; height: 27px; border: 1px solid #ddd; border-radius: 3px; padding: 0 7px; font: 12px "Liberation Sans", Arial, sans-serif; }
.country-search::placeholder { color: #aaa; opacity: 1; }
.legend { position: relative; margin: 38px 0 0 16px; width: 180px; color: #555; }
.legend-title { width: 160px; font-size: 14px; line-height: 21px; font-weight: 700; color: #555; }
.range-vals { display: flex; justify-content: space-between; font-size: 12px; line-height: 16px; color: #555; }
.legend .range-vals { width: 158px; margin-top: 6px; }
.range { position: relative; height: 4px; background: #8cc6f5; margin: 0 6px; }
.legend .range { width: 146px; margin-top: 14px; }
.knob { position: absolute; top: -5px; left: -6px; width: 14px; height: 14px; border-radius: 50%; border: 2px solid #7fc0f5; background: #fff; }
.knob + .knob { left: auto; right: -6px; }
.gradient { width: 156px; height: 25px; margin-top: 19px; background: linear-gradient(90deg, #f0c555, #7f9e3f 45%, #1c6532); }
.legend-head { font-size: 14px; line-height: 20px; font-weight: 700; color: #555; margin-top: 5px; }
.legend-text { font-size: 13px; line-height: 19.400px; color: #555; margin-top: 3px; width: 180px; }
.swatch { display: inline-block; width: 10px; height: 10px; background: #77787e; margin-right: 3px; }
.map-info { position: absolute; left: 720px; top: 249px; width: 28px; height: 28px; border-radius: 50%; background: #1a82e2; color: #fff; font: 700 20px/28px "DejaVu Serif", serif; text-align: center; }

/* filters */
.filters { width: 150px; flex: none; padding-top: 37px; }
.f-label { display: block; font-size: 14px; font-weight: 700; line-height: 22px; color: #555; white-space: nowrap; }
.f-box { width: 145px; height: 27px; border: 1px solid #ccc; border-radius: 3px; font-size: 12px; line-height: 25px; text-align: center; color: #555; }
.f-select { display: flex; align-items: center; justify-content: space-between; padding: 0 14px 0 7px; }
.year-vals { width: 145px; margin-top: 6px; }
.year-range { width: 133px; margin: 15px 0 0 6px; }
.f-legis { margin-top: 18px; }
.opt { font-size: 14px; line-height: 21px; color: #555; padding-left: 4px; width: 120px; margin-top: 3.500px; margin-bottom: 8.500px; }
.f-dtype { margin-top: -5px; margin-bottom: -2px; }
.toggle { display: inline-block; position: relative; width: 28px; height: 14px; border-radius: 7px; background: #c4c4c4; vertical-align: -2px; margin-right: 4px; }
.toggle::after { content: ""; position: absolute; left: 2px; top: 1.500px; width: 11px; height: 11px; border-radius: 50%; background: #fff; }
.toggle.on { background: #0f7fe6; }
.toggle.on::after { left: auto; right: 2px; }
.check { display: flex; align-items: center; height: 29.300px; font-size: 14px; color: #555; padding-left: 4px; white-space: nowrap; }
.check input { margin: 0 4px 3px 0; width: 13px; height: 13px; accent-color: #0f72d8; flex: none; }
.ci { display: inline-block; width: 12px; height: 12px; margin-left: 2px; border: 1px solid #1a82e2; border-radius: 50%; color: #1a82e2; font: 9px/10px "Liberation Serif", serif; text-align: center; }

.viz-foot { display: flex; padding-left: 258px; }
.credit { width: 639px; flex: none; padding-top: 4px; }
.credit-main { font-size: 12px; line-height: 16px; font-weight: 700; color: #555; white-space: nowrap; }
.credit-link { color: #0f7fe6; }
.credit-date { font-size: 11px; line-height: 16px; font-weight: 700; color: #555; white-space: nowrap; }
.tabbar { width: 313px; height: 41px; border-top: 1.500px solid #666; border-left: 1.500px solid #666; display: flex; }
.tabs { display: flex; width: 238px; height: 40px; border-bottom: 2px solid #e4e4e4; }
.tab { font-size: 14px; line-height: 37px; font-weight: 700; color: #555; padding: 0 12px; height: 40px; white-space: nowrap; }
.tab.active { color: #0f7fe6; border-bottom: 3px solid #0f7fe6; width: 53px; }
.tab-ic { margin: 10px 0 0 13px; flex: none; }
.tab-share { margin: 12px 0 0 23px; }

/* see more */
.more { height: 521px; background: #f1f1f1; padding: 49px 347px 0 348px; }
.more-title { font-family: Lato, sans-serif; font-size: 16.300px; font-weight: 500; line-height: 20px; text-align: center; color: #222; margin-bottom: 19px; }
.carousel { display: flex; align-items: flex-start; justify-content: space-between; }
.arrow { width: 36px; height: 100px; margin-top: 131px; padding: 0; border: 0; background: #a9a9a9; display: flex; align-items: center; justify-content: center; flex: none; }
.arrow-left { border-radius: 0 36px 36px 0 / 0 42px 42px 0; }
.arrow-right { border-radius: 36px 0 0 36px / 42px 0 0 42px; }
.cards { display: flex; gap: 66px; }
.card { width: 326px; flex: none; }
.thumb { display: block; }
.card-title { font-size: 15px; line-height: 25px; font-weight: 700; color: #2a2a2a; margin-top: 11px; }
.card-text { font-size: 15px; line-height: 24.900px; font-style: italic; color: #333; margin-top: 14px; }

.t3 { font-size: 2.600px; fill: #777; }
.t4 { font-size: 3.400px; fill: #555; }
.td { font-weight: 700; }
.end { text-anchor: end; }
.mid { text-anchor: middle; }

.sitefoot { height: 56px; background: #50575e; color: #fff; font-size: 10.300px; font-weight: 700; line-height: 57px; padding-left: 347px; }
```
